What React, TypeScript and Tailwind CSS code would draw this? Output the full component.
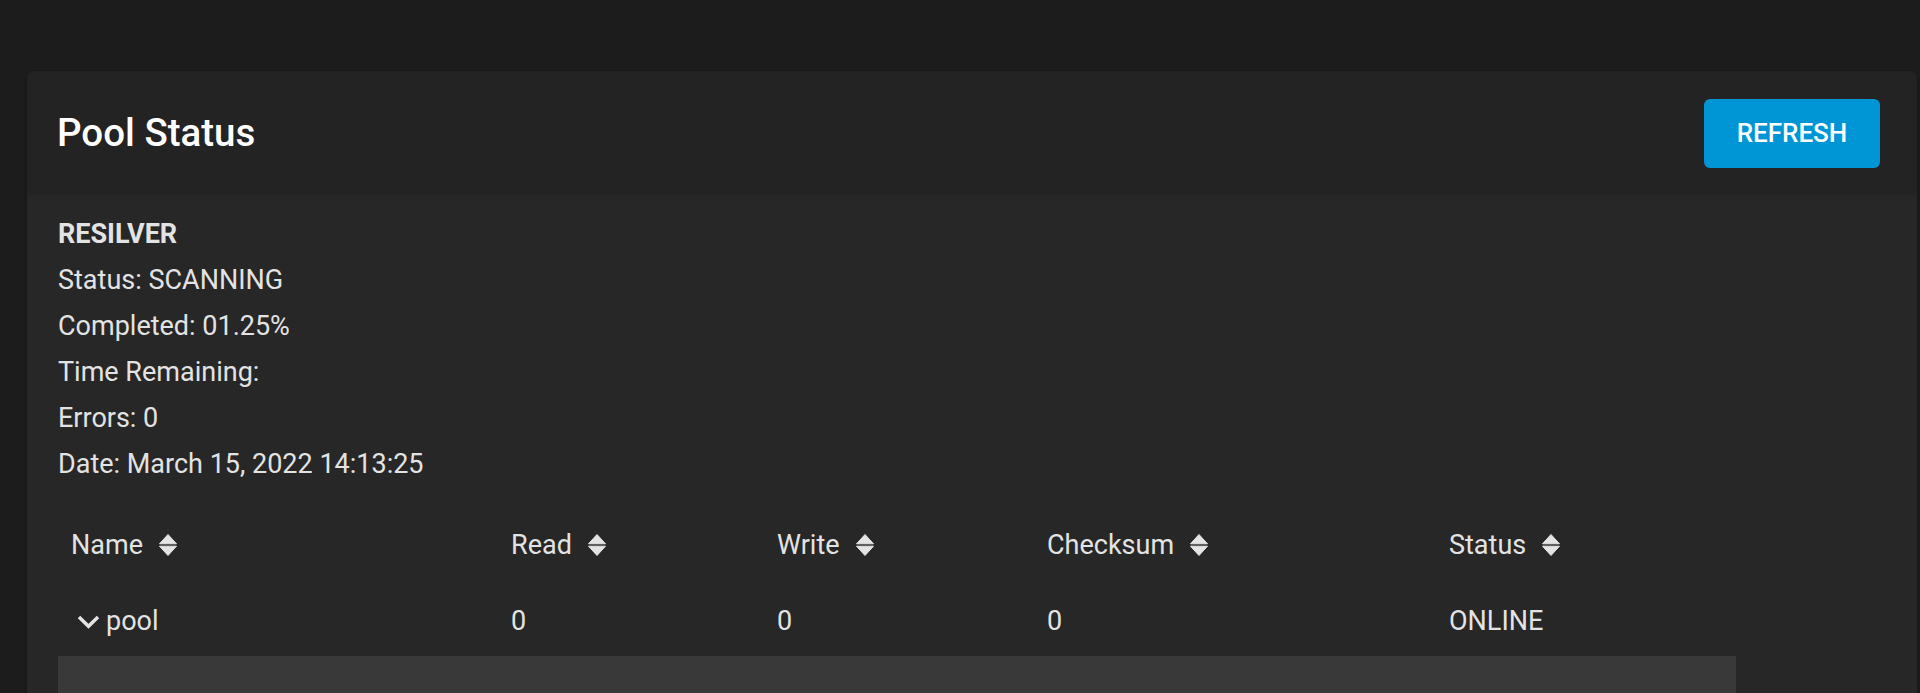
import React from "react";

const COLUMNS = ["Name", "Read", "Write", "Checksum", "Status"] as const;

const RESILVER_LINES = [
  "Status: SCANNING",
  "Completed: 01.25%",
  "Time Remaining:",
  "Errors: 0",
  "Date: March 15, 2022 14:13:25",
];

function SortIcon() {
  return (
    <svg width="18" height="22" viewBox="0 0 18 22" className="ml-4 shrink-0">
      <path d="M9 0.5 L17.5 9.8 L0.5 9.8 Z" fill="#e4e4e4" strokeLinejoin="round" stroke="#e4e4e4" strokeWidth="1" />
      <path d="M0.5 12.2 L17.5 12.2 L9 21.5 Z" fill="#e4e4e4" strokeLinejoin="round" stroke="#e4e4e4" strokeWidth="1" />
    </svg>
  );
}

function Chevron() {
  return (
    <svg width="23" height="14" viewBox="0 0 23 14" className="shrink-0">
      <polyline points="2,2 11.5,11.3 21,2" fill="none" stroke="#e4e4e4" strokeWidth="3.4" />
    </svg>
  );
}

export default function App() {
  return (
    <div className="h-[693px] overflow-hidden bg-[#1c1c1c] pl-[27px] pr-[3px] pt-[71px] font-['Roboto','Liberation_Sans',sans-serif]">
      <div className="overflow-hidden rounded-lg bg-[#272727] shadow-[0_1px_3px_rgba(0,0,0,0.35)]">
        <div className="flex h-[124px] items-center justify-between bg-[#232323] pl-[30px] pr-[37px]">
          <h1 className="text-[38.5px] font-medium leading-none text-white">Pool Status</h1>
          <button className="h-[69px] w-[176px] rounded-md bg-[#0095d5] text-[26px] font-medium text-white">
            REFRESH
          </button>
        </div>

        <div className="px-[31px] pt-4 pb-10">
          <div className="text-[27px] leading-[46px] text-[#e3e3e3]">
            <div className="font-bold">RESILVER</div>
            {RESILVER_LINES.map((line) => (
              <div key={line}>{line}</div>
            ))}
          </div>

          <div className="mt-5 w-[1678px] text-[27px] text-[#e3e3e3]">
            <div className="grid h-[76px] grid-cols-[440px_266px_270px_402px_1fr] items-center">
              {COLUMNS.map((col) => (
                <div key={col} className="flex items-center pl-[13px]">
                  <span>{col}</span>
                  <SortIcon />
                </div>
              ))}
            </div>
            <div className="grid h-[73px] grid-cols-[440px_266px_270px_402px_1fr] items-center pt-[4px]">
              <div className="flex items-center gap-[6px] pl-[19px]">
                <Chevron />
                <span>pool</span>
              </div>
              <div className="pl-[13px]">0</div>
              <div className="pl-[13px]">0</div>
              <div className="pl-[13px]">0</div>
              <div className="pl-[13px]">ONLINE</div>
            </div>
            <div className="h-[120px] bg-[#393939]" />
          </div>
        </div>
      </div>
    </div>
  );
}
